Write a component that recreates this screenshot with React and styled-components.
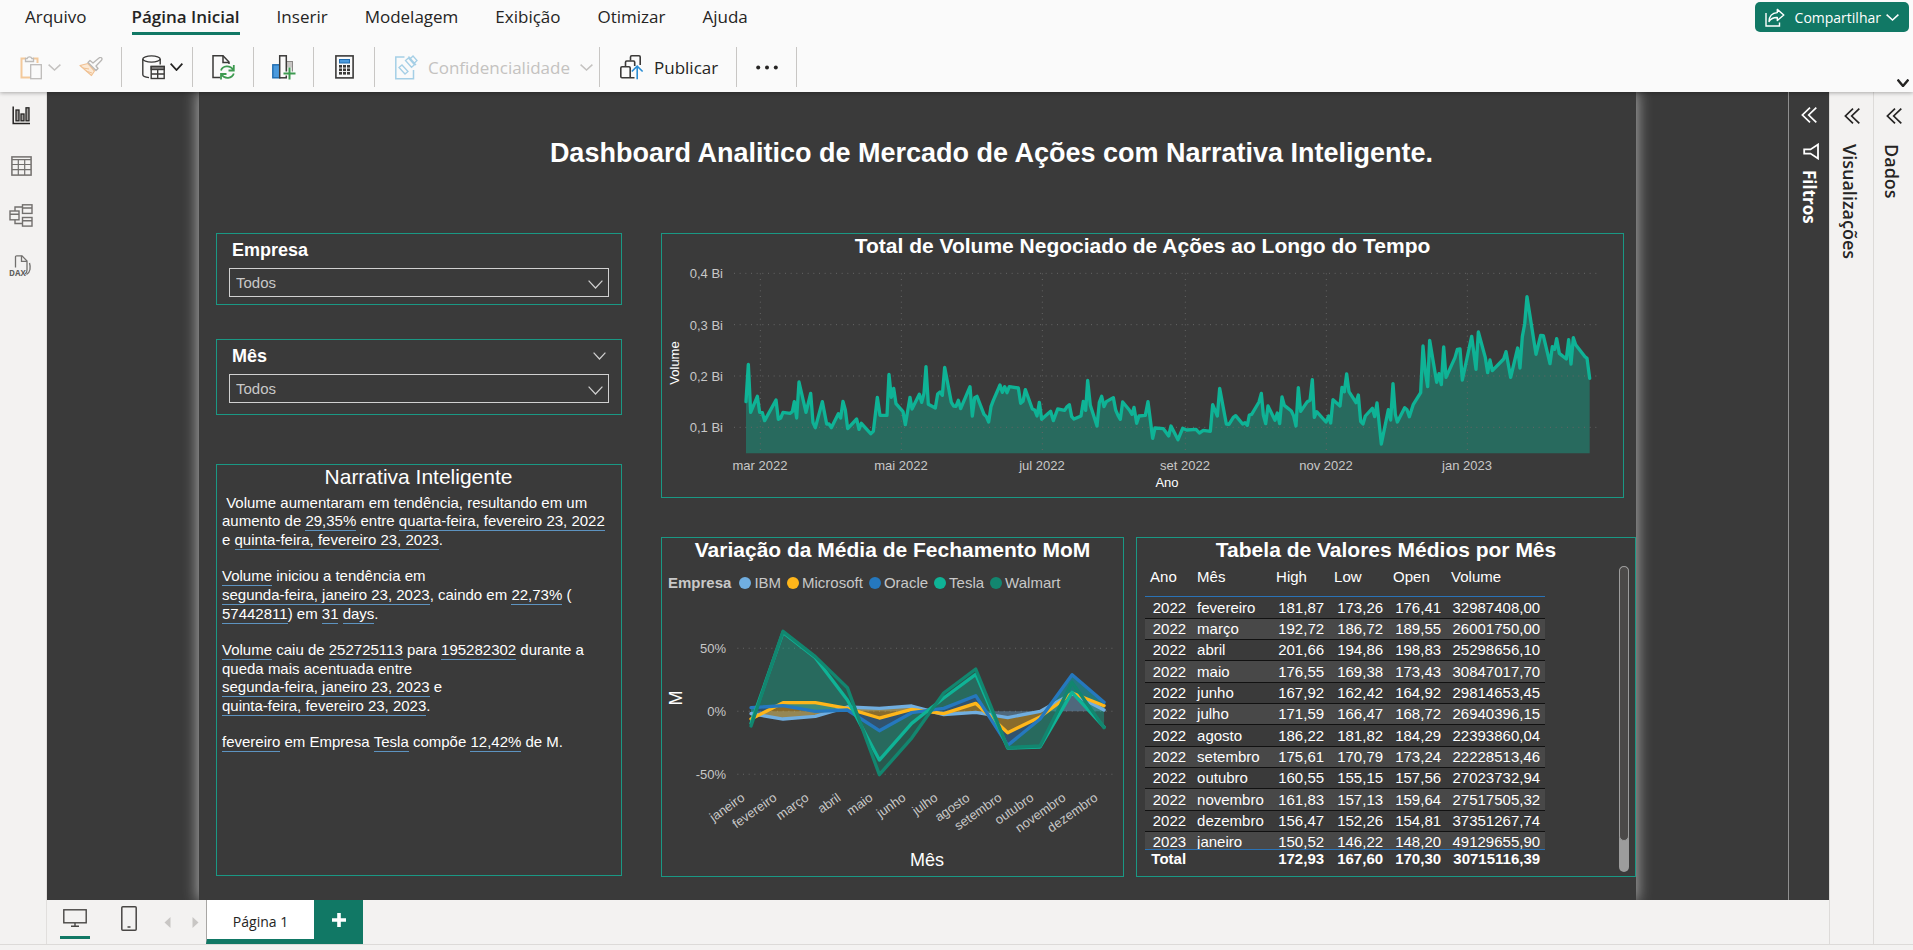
import React from "react";
import styled, { createGlobalStyle } from "styled-components";

const C = {
  chrome: "#fafafa",
  pane: "#f3f2f1",
  line: "#e1dfdd",
  canvas: "#3a3a3a",
  accent: "#117865",
  frame: "#1a9884",
  ink: "#252423",
  ibm: "#70aee0",
  microsoft: "#ffb61a",
  oracle: "#2578be",
  tesla: "#0fb396",
  walmart: "#12866f",
};

const GlobalStyle = createGlobalStyle`
  *, *::before, *::after { box-sizing: border-box; }
  body { margin: 0; background: ${C.pane}; font-family: "Open Sans", "Noto Sans", sans-serif; }
  button, select { font: inherit; color: inherit; }
  button { border: 0; padding: 0; background: none; cursor: pointer; }
  h1, h2, p { margin: 0; }
  svg { display: block; flex: none; }
`;

const Shell = styled.div`
  min-height: 100vh;
  display: flex;
  flex-direction: column;
`;

const Header = styled.header`
  position: relative;
  z-index: 2;
  height: 92px;
  background: ${C.chrome};
  box-shadow: 0 1px 4px rgba(0, 0, 0, 0.3);
`;

const MenuBar = styled.div`
  display: flex;
  justify-content: space-between;
  height: 40px;
  padding: 2px 4px 0 25px;
`;

const Menu = styled.nav`
  display: flex;
  gap: 37px;
  align-items: flex-start;
`;

const MenuLink = styled.a`
  height: 33px;
  padding-top: 3px;
  margin-left: ${(p) => (p.$active ? "8px" : "0")};
  border-bottom: 3px solid ${(p) => (p.$active ? C.accent : "transparent")};
  color: ${C.ink};
  font-size: 17px;
  line-height: 24px;
  font-weight: ${(p) => (p.$active ? 600 : 400)};
  text-decoration: none;
  white-space: nowrap;
`;

const ShareButton = styled.button`
  display: flex;
  align-items: center;
  height: 30px;
  padding: 0 10px;
  border-radius: 5px;
  background: ${C.accent};
  color: #fff;
  font-size: 14px;

  span { margin: 0 5px 0 10px; }
`;

const ToolBar = styled.div`
  display: flex;
  height: 52px;
  padding: 7px 4px 5px 0;
`;

const ToolGroup = styled.div`
  display: flex;
  align-items: center;
  justify-content: ${(p) => (p.$start ? "flex-start" : "center")};
  gap: ${(p) => p.$gap || 4}px;
  width: ${(p) => p.$w}px;
  padding-left: ${(p) => (p.$start ? "20px" : "0")};
  border-right: 1px solid #c8c6c4;
`;

const ToolButton = styled.button`
  display: flex;
  align-items: center;
  gap: ${(p) => p.$gap || 5}px;
  color: ${C.ink};
  font-size: 17px;
  white-space: nowrap;

  &:disabled { color: #c4c2c0; cursor: default; }
`;

const CollapseButton = styled.button`
  align-self: flex-end;
  margin-left: auto;
  height: 8px;
`;

const Body = styled.div`
  flex: 1;
  display: flex;
  border-bottom: 1px solid #dcdad8;
  margin-bottom: 5px;
`;

const Rail = styled.nav`
  width: 47px;
  flex: none;
  display: flex;
  flex-direction: column;
  align-items: center;
  gap: 25px;
  padding: 11px 4px 0 0;
  background: ${C.pane};
  border-right: 1px solid ${C.line};
`;

const RailButton = styled.button`
  width: 26px;
  height: 25px;
  display: flex;
  align-items: center;
  justify-content: center;
`;

const Center = styled.div`
  flex: 1;
  min-width: 0;
  display: flex;
  flex-direction: column;
`;

const Stage = styled.div`
  flex: 1;
  display: flex;
  background: ${C.canvas};
`;

const Desk = styled.main`
  flex: 1;
  min-width: 0;
  padding: 0 152px;
  overflow: hidden;
`;

const Page = styled.div`
  height: 100%;
  padding: 0 0 23px 17px;
  background: ${C.canvas};
  box-shadow: 0 0 14px 1px rgba(255, 255, 255, 0.6);
`;

const PageTitle = styled.h1`
  padding: 45px 0 64px 131px;
  text-align: center;
  color: #fff;
  font: 700 27px/32px "Liberation Sans", Arial, sans-serif;
`;

const Columns = styled.div`
  display: flex;
  gap: 39px;
  font-family: "Liberation Sans", Arial, sans-serif;
`;

const LeftColumn = styled.div`
  width: 406px;
  flex: none;
  display: flex;
  flex-direction: column;
`;

const RightColumn = styled.div`
  flex: 1;
  min-width: 0;
  display: flex;
  flex-direction: column;
  gap: 39px;
`;

const Card = styled.section`
  border: 1px solid ${C.frame};
  color: #fff;
`;

const VolumeCard = styled(Card)`
  margin-right: 12px;
  min-height: 265px;
`;

const CardRow = styled.div`
  display: flex;
  gap: 12px;
`;

const RowCard = styled(Card)`
  flex: ${(p) => p.$share} 1 0;
  min-width: 0;
  height: 340px;
`;

const CardTitle = styled.h2`
  height: 28px;
  text-align: center;
  white-space: nowrap;
  font-size: 21px;
  line-height: 24px;
`;

const SlicerCard = styled(Card)`
  height: ${(p) => p.$h}px;
  margin-bottom: ${(p) => p.$gap}px;
  padding: 4px 12px 0;
`;

const SlicerHead = styled.div`
  display: flex;
  align-items: center;
  justify-content: space-between;
  height: 24px;
  padding: 0 3px;
  margin-bottom: 6px;

  label { font-size: 18px; font-weight: 700; }
`;

const SelectBox = styled.div`
  display: grid;
  align-items: center;

  select, svg { grid-area: 1 / 1; }
  svg { justify-self: end; margin: 4px 6px 0 0; pointer-events: none; }
`;

const Select = styled.select`
  appearance: none;
  width: 100%;
  height: 29px;
  padding: 0 24px 0 6px;
  border: 1px solid #d0d0d0;
  border-radius: 0;
  background: transparent;
  color: #c8c8c8;
  font-size: 15px;
`;

const NarrativeCard = styled(Card)`
  height: 412px;
  padding: 0 6px 0 5px;

  h2 {
    height: 29px;
    text-align: center;
    font-size: 21px;
    line-height: 24px;
    font-weight: 400;
  }

  p {
    margin-bottom: 17px;
    font-size: 15px;
    line-height: 18px;
    white-space: pre-wrap;
  }
`;

const Value = styled.span`
  display: inline-block;
  white-space: nowrap;
  border-bottom: 1px solid #5d93c0;
`;

const Legend = styled.div`
  display: flex;
  align-items: center;
  gap: 6px;
  height: 32px;
  padding: 1px 0 0 6px;
  color: #c8c8c8;
  font-size: 15px;

  b { margin-right: 2px; }
`;

const LegendItem = styled.span`
  display: flex;
  align-items: center;
  gap: 3px;

  &::before {
    content: "";
    width: 12px;
    height: 12px;
    border-radius: 50%;
    background: ${(p) => p.$color};
  }
`;

const Chart = styled.svg`
  width: 100%;
  height: auto;
  font-family: "Liberation Sans", Arial, sans-serif;

  text { dominant-baseline: central; }
`;

const AxisLabel = styled.text`
  fill: #c8c8c8;
  font-size: 13px;
`;

const AxisName = styled.text`
  fill: #fff;
  font-size: ${(p) => p.$size}px;
  text-anchor: middle;
`;

const TableArea = styled.div`
  display: flex;
  justify-content: space-between;
  padding: 0 6px 0 8px;
`;

const TableScroll = styled.div`
  height: 305px;
  overflow: hidden;
`;

const DataTable = styled.table`
  width: 400px;
  table-layout: fixed;
  border-collapse: separate;
  border-spacing: 0;
  font-size: 15px;
  line-height: 18px;

  th, td { padding: 0 5px; text-align: right; white-space: nowrap; }
  td:nth-child(2) { text-align: left; }
  thead th {
    height: 31px;
    padding-bottom: 9px;
    border-bottom: 1px solid #2a72b5;
    text-align: left;
    font-weight: 400;
    vertical-align: middle;
  }
  tbody td { height: 21px; border-bottom: 1px solid #111; }
  tbody tr:nth-child(3n + 1) td { height: 22px; }
  tbody td:first-child, tfoot th { padding-right: 6px; }
  tbody tr:nth-child(even) td { background: #484848; }
  tfoot th, tfoot td {
    position: sticky;
    bottom: 0;
    height: 22px;
    border-top: 1px solid #2a72b5;
    background: ${C.canvas};
    font-weight: 700;
    vertical-align: top;
  }
`;

const ScrollTrack = styled.div`
  width: 10px;
  height: 306px;
  border-radius: 5px;
  background: #9c9c9c;
`;

const ScrollThumb = styled.div`
  height: 275px;
  border: 1px solid #9c9c9c;
  border-radius: 5px;
  background: #4b4948;
`;

const SidePane = styled.aside`
  width: ${(p) => p.$w}px;
  flex: none;
  display: flex;
  flex-direction: column;
  align-items: center;
  gap: 20px;
  padding-top: ${(p) => (p.$dark ? 15 : 16)}px;
  border-left: 1px solid ${(p) => (p.$dark ? "#8f8f8f" : "#dddbd9")};
  background: ${(p) => (p.$dark ? C.canvas : C.pane)};
  color: ${(p) => (p.$dark ? "#fff" : C.ink)};
`;

const FilterHead = styled.div`
  display: flex;
  flex-direction: column;
  align-items: center;
  gap: 10px;
  padding-left: 4px;
`;

const PaneLabel = styled.span`
  writing-mode: vertical-rl;
  padding-right: 4px;
  font-size: ${(p) => (p.$bold ? 17 : 18)}px;
  line-height: 20px;
  font-weight: ${(p) => (p.$bold ? 700 : 600)};
`;

const FooterBar = styled.footer`
  display: flex;
  align-items: stretch;
  height: 44px;
  background: ${C.pane};
`;

const ViewButton = styled.button`
  display: flex;
  justify-content: center;
  width: 30px;
  margin: 0 ${(p) => p.$right}px 5px 0;
  padding-top: ${(p) => p.$top}px;
  border-bottom: 3px solid ${(p) => (p.$active ? C.accent : "transparent")};
`;

const ViewGroup = styled.div`
  display: flex;
  width: 159px;
  padding-left: 13px;
`;

const PageArrow = styled.button`
  width: 22px;
  margin-left: 6px;
  display: flex;
  align-items: center;
  justify-content: center;
`;

const PageTab = styled.button`
  width: 108px;
  border-left: 1px solid #a8a6a4;
  border-bottom: 5px solid ${C.accent};
  background: #fff;
  padding-top: 4px;
  font-size: 14px;
  color: ${C.ink};
`;

const AddPage = styled.button`
  display: flex;
  align-items: center;
  justify-content: center;
  width: 49px;
  padding-bottom: 4px;
  background: ${C.accent};
`;

/* ---------- icons ---------- */

const Chevron = ({ w = 13, h = 7, color = C.ink, sw = 1.5 }) => (
  <svg width={w} height={h} viewBox={`0 0 ${w} ${h}`} fill="none" stroke={color} strokeWidth={sw}>
    <path d={`M0.6 0.6 L${w / 2} ${h - 1} L${w - 0.6} 0.6`} />
  </svg>
);

const DoubleChevron = () => (
  <svg width="16" height="16" viewBox="0 0 16 16" fill="none" stroke="currentColor" strokeWidth="1.7">
    <path d="M9 0.7 L1.4 8 L9 15.3 M15.3 0.7 L7.7 8 L15.3 15.3" />
  </svg>
);

const PasteIcon = () => (
  <svg width="23" height="25" viewBox="0 0 23 25" fill="none">
    <path d="M6 3.5 H1.5 V22.5 H10" stroke="#f3c99b" strokeWidth="2" />
    <path d="M13 3.5 H17.5 V8" stroke="#f3c99b" strokeWidth="2" />
    <path d="M5.5 6.5 V3.5 H7.2 A2.4 2.4 0 0 1 11.8 3.5 H13.5 V6.5 Z" stroke="#bdbbb9" strokeWidth="1.3" fill="#fafafa" />
    <rect x="10.7" y="9.7" width="10.6" height="14" stroke="#bdbbb9" strokeWidth="1.3" fill="#fafafa" />
  </svg>
);

const BrushIcon = () => (
  <svg width="24" height="20" viewBox="0 0 24 20" fill="none">
    <path d="M1 8.5 L9 6.5 L15.5 14 L12.5 18.5 Z" fill="#fbe9d5" stroke="#f0c193" strokeWidth="1.2" strokeLinejoin="round" />
    <path d="M4 11 L10 12 M7 14 L13 16" stroke="#f0c193" />
    <path d="M9 5.5 L11 3.5 L14 6 L20 1 A1.6 1.6 0 0 1 22.5 3.2 L17 9 L19 11.5 L17 13.5 Z" fill="#fafafa" stroke="#b8b6b4" strokeWidth="1.3" strokeLinejoin="round" />
  </svg>
);

const DataIcon = () => (
  <svg width="23" height="25" viewBox="0 0 23 25" fill="none" stroke="#3b3a39" strokeWidth="1.4">
    <ellipse cx="9.5" cy="4" rx="8.7" ry="3.1" />
    <path d="M0.8 4 V19.5 C0.8 21.2 3 22.3 7 22.6 M18.2 4 V9.5" />
    <rect x="9.2" y="11.5" width="13" height="12" fill="#fafafa" />
    <rect x="9.2" y="11.5" width="13" height="3" fill="#8a8886" />
    <path d="M9.2 19 H22.2 M15.7 14.5 V23.5" />
  </svg>
);

const RefreshIcon = () => (
  <svg width="23" height="25" viewBox="0 0 23 25" fill="none" strokeWidth="1.5">
    <path d="M8 22.5 H1 V0.8 H11 L17 7 V9" stroke="#3b3a39" />
    <path d="M11 0.8 V7.5 H17" stroke="#3b3a39" />
    <path d="M9 15.5 C10.5 10.5 18 9.5 21.3 15 M21.8 10 V15.5 H16.5" stroke="#3d9a50" strokeWidth="1.8" />
    <path d="M21.8 18.5 C20 23.5 13 24.6 9.3 19.5 M9 24.5 V19 H14.5" stroke="#3d9a50" strokeWidth="1.8" />
  </svg>
);

const NewVisualIcon = () => (
  <svg width="24" height="25" viewBox="0 0 24 25" fill="none">
    <rect x="14.5" y="6.5" width="6" height="12" fill="#c8c6c4" stroke="#8a8886" />
    <rect x="0.8" y="9.8" width="7" height="13" fill="#4a9ade" stroke="#1f6cb0" strokeWidth="1.4" />
    <rect x="7.7" y="0.8" width="6.6" height="22" fill="#fafafa" stroke="#3b3a39" strokeWidth="1.5" />
    <path d="M17.5 12.5 V24.5 M11.5 18.5 H23.5" stroke="#fafafa" strokeWidth="4" />
    <path d="M17.5 12.5 V24.5 M11.5 18.5 H23.5" stroke="#3d9a50" strokeWidth="2" />
  </svg>
);

const CalculatorIcon = () => (
  <svg width="19" height="24" viewBox="0 0 19 24" fill="none">
    <rect x="0.9" y="0.9" width="17.2" height="22" stroke="#3b3a39" strokeWidth="1.6" />
    <rect x="4.5" y="4.5" width="10" height="3.5" fill="#4a9ade" stroke="#1f6cb0" />
    {[10, 13.5, 17].map((y) =>
      [4, 8, 12].map((x) => <rect key={`${x}-${y}`} x={x} y={y} width="3" height="2.6" fill="#3b3a39" />)
    )}
  </svg>
);

const SensitivityIcon = () => (
  <svg width="23" height="25" viewBox="0 0 23 25" fill="none" stroke="#a5cfe6" strokeWidth="1.5">
    <path d="M9.5 2 H0.8 V23.8 H18.5 V15" />
    <path d="M4 12.5 L7 10 L13 16.5 L10 19 Z" strokeWidth="1.3" />
    <path d="M10.5 5.5 L13.5 3 L19.5 9.8 L16.5 12.3 Z M13.5 1.5 L21 10 M15.5 3.5 L18 1 L22 5.5 L19.5 8" strokeWidth="1.3" />
  </svg>
);

const PublishIcon = () => (
  <svg width="24" height="25" viewBox="0 0 24 25" fill="none" stroke="#3b3a39" strokeWidth="1.6">
    <path d="M10.5 5.5 V2 Q10.5 0.8 11.7 0.8 H19 Q20.2 0.8 20.2 2 V10" />
    <path d="M5.5 11.5 V7.2 Q5.5 6 6.7 6 H13.5 Q14.7 6 14.7 7.2 V11" />
    <path d="M10.2 22.8 H2 Q0.8 22.8 0.8 21.6 V13 Q0.8 11.8 2 11.8 H9 Q10.2 11.8 10.2 13 Z M10.2 22.8 H14.5" />
    <path d="M17.2 24.3 V11.5 M11.8 16.5 L17.2 11.2 L22.6 16.5" stroke="#2a8dd4" />
  </svg>
);

const DotsIcon = () => (
  <svg width="22" height="5" viewBox="0 0 22 5" fill={C.ink}>
    <circle cx="2.2" cy="2.5" r="2" />
    <circle cx="11" cy="2.5" r="2" />
    <circle cx="19.8" cy="2.5" r="2" />
  </svg>
);

const ShareIcon = () => (
  <svg width="20" height="19" viewBox="0 0 20 19" fill="none" stroke="#fff" strokeWidth="1.4">
    <path d="M1 5 V18 H14.5 V14.5" />
    <path d="M12.3 1.4 L18.8 7 L12.3 12.5 V9.5 C8.5 9.3 6 10.5 4 13.5 C4.2 8.5 7 5 12.3 4.6 Z" strokeLinejoin="round" />
  </svg>
);

const ReportIcon = () => (
  <svg width="19" height="19" viewBox="0 0 19 19" fill="#a19f9d" stroke="#252423" strokeWidth="1.3">
    <path d="M1.2 0.5 V17.4 H18" fill="none" strokeWidth="1.5" />
    <rect x="4" y="4" width="3" height="10.8" />
    <rect x="9" y="8" width="3" height="6.8" />
    <rect x="14" y="1.8" width="3" height="13" />
  </svg>
);

const TableIcon = () => (
  <svg width="21" height="20" viewBox="0 0 21 20" fill="none" stroke="#72706e" strokeWidth="1.2">
    <rect x="0.9" y="0.9" width="19.2" height="18.2" strokeWidth="1.5" />
    <path d="M1 3.6 H20 M1 8.5 H20 M1 13.7 H20 M7.3 3.6 V19 M13.7 3.6 V19" />
  </svg>
);

const ModelIcon = () => (
  <svg width="24" height="23" viewBox="0 0 24 23" fill="none" stroke="#72706e" strokeWidth="1.4">
    <rect x="13.5" y="0.8" width="9.5" height="8.6" />
    <rect x="13.5" y="13.5" width="9.5" height="8.6" />
    <rect x="1" y="7" width="9" height="8.8" />
    <path d="M13.5 4 H23 M13.5 16.8 H23 M1 10.2 H10 M6 7 V3 H13.5 M6 15.8 V19.5 H13.5" />
  </svg>
);

const DaxIcon = () => (
  <svg width="24" height="22" viewBox="0 0 24 22" fill="none" stroke="#72706e" strokeWidth="1.3">
    <path d="M6.5 12.5 V2 Q6.5 0.8 7.7 0.8 H13 L18 6 V15 Q18 18 16 19" />
    <path d="M12.5 0.8 V6.3 H18 M20.5 8 C21.8 12 21.5 17.5 17.5 19.5" />
    <text x="0" y="20.5" fontSize="8" fontWeight="700" fill="#605e5c" stroke="none" fontFamily="Open Sans, sans-serif">DAX</text>
  </svg>
);

const FilterIcon = () => (
  <svg width="16" height="17" viewBox="0 0 16 17" fill="none" stroke="#fff" strokeWidth="1.8">
    <path d="M15 1.5 V15.5 L7.5 10.6 H1.2 V6.4 H7.5 Z" />
  </svg>
);

const DesktopIcon = () => (
  <svg width="24" height="18" viewBox="0 0 24 18" fill="none" stroke="#484644" strokeWidth="1.4">
    <rect x="0.8" y="0.8" width="22.4" height="13" />
    <path d="M12 14 V17 M8 17.2 H16" />
  </svg>
);

const PhoneIcon = () => (
  <svg width="16" height="25" viewBox="0 0 16 25" fill="none" stroke="#484644" strokeWidth="1.5">
    <rect x="0.8" y="0.8" width="14.4" height="23.4" rx="1" />
    <path d="M6.5 21 H9.5" />
  </svg>
);

const ArrowIcon = ({ left }) => (
  <svg width="7" height="11" viewBox="0 0 7 11" fill="#c8c6c4">
    <path d={left ? "M6.5 0 V11 L0.5 5.5 Z" : "M0.5 0 V11 L6.5 5.5 Z"} />
  </svg>
);

const PlusIcon = () => (
  <svg width="14" height="14" viewBox="0 0 14 14" stroke="#fff" strokeWidth="3.6">
    <path d="M7 0 V14 M0 7 H14" />
  </svg>
);

/* ---------- volume chart ---------- */

const VOLUME_LINE =
  "288,545 295,433 302,577 322,529 329,577 337,578 344,602 378,540 385,598 392,594 399,577 420,580 427,575 433,545 440,594 447,486 468,577 482,520 489,608 496,623 517,545 530,612 537,612 544,623 565,581 572,594 579,544 586,570 593,626 620,597 627,628 634,610 662,641 670,634 682,532 690,586 711,586 717,463 724,532 731,505 738,551 759,575 766,614 780,532 786,567 808,523 815,547 822,520 828,440 835,553 856,564 863,522 870,516 877,526 884,442 904,547 911,558 918,559 925,541 932,566 960,500 967,588 974,533 981,529 1002,583 1009,590 1016,606 1023,560 1030,541 1050,495 1057,517 1064,500 1071,518 1078,500 1105,504 1112,550 1119,544 1126,509 1147,567 1154,570 1161,588 1168,547 1175,598 1202,574 1210,602 1223,567 1244,571 1251,560 1258,554 1265,590 1272,597 1293,588 1300,544 1307,571 1313,481 1321,556 1341,618 1348,547 1355,529 1362,560 1369,545 1390,533 1397,570 1404,586 1411,598 1418,546 1438,570 1446,583 1452,562 1460,610 1467,588 1486,586 1494,545 1508,655 1515,624 1540,626 1556,648 1563,618 1584,659 1598,625 1610,630 1638,628 1648,639 1660,631 1681,634 1688,554 1702,588 1709,505 1729,612 1737,613 1750,592 1757,587 1778,612 1785,608 1792,616 1798,585 1805,583 1827,546 1834,520 1840,585 1847,611 1854,558 1875,601 1882,579 1889,611 1896,531 1903,556 1924,573 1931,588 1938,618 1945,503 1952,574 1972,545 1980,541 1987,479 1993,592 2000,575 2028,606 2036,588 2042,609 2049,539 2070,558 2076,502 2083,515 2090,462 2097,515 2118,548 2125,525 2132,604 2139,612 2146,588 2167,565 2174,590 2181,549 2194,672 2215,569 2222,600 2229,491 2236,583 2242,606 2264,563 2271,569 2278,590 2290,553 2312,518 2319,378 2326,455 2333,500 2339,361 2360,487 2367,461 2374,494 2381,381 2388,472 2415,413 2422,388 2430,387 2437,480 2465,349 2478,448 2485,336 2506,413 2513,458 2520,420 2527,452 2561,417 2568,395 2582,472 2603,384 2610,444 2617,350 2624,312 2631,230 2658,403 2672,346 2680,347 2700,431 2707,380 2714,388 2720,356 2728,400 2749,417 2756,359 2763,432 2770,353 2777,374 2805,410 2811,415 2819,475";

const VOLUME_ROWS = [
  ["0,4 Bi", 160],
  ["0,3 Bi", 314],
  ["0,2 Bi", 468],
  ["0,1 Bi", 622],
];
const VOLUME_COLS = [
  ["mar 2022", 331],
  ["mai 2022", 754],
  ["jul 2022", 1177],
  ["set 2022", 1606],
  ["nov 2022", 2029],
  ["jan 2023", 2452],
];

const GridLine = styled.path`
  fill: none;
  stroke: #666;
  stroke-width: 3;
  stroke-dasharray: 3 14;
`;

const VolumeChart = () => (
  <Chart viewBox="0 0 961 235" role="img" aria-label="Total de Volume Negociado">
    <svg width="961" height="235" viewBox="36 126 2883 705">
      <polygon points={`288,700 ${VOLUME_LINE} 2819,700`} fill={C.tesla} fillOpacity="0.4" />
      {VOLUME_ROWS.map(([t, y]) => <GridLine key={t} d={`M252 ${y} H2850`} />)}
      {VOLUME_COLS.map(([t, x]) => <GridLine key={t} d={`M${x} 160 V700`} />)}
      <polyline points={VOLUME_LINE} fill="none" stroke={C.tesla} strokeWidth="10" strokeLinejoin="round" strokeLinecap="round" />
    </svg>
    {VOLUME_ROWS.map(([t, y]) => (
      <AxisLabel key={t} x="61" y={Math.round((y - 126) / 3)} textAnchor="end">{t}</AxisLabel>
    ))}
    {VOLUME_COLS.map(([t, x]) => (
      <AxisLabel key={t} x={Math.round((x - 36) / 3)} y="203" textAnchor="middle">{t}</AxisLabel>
    ))}
    <AxisName $size={13} x="505" y="220">Ano</AxisName>
    <AxisName $size={13} transform="translate(12 101) rotate(-90)">Volume</AxisName>
  </Chart>
);

/* ---------- month over month chart ---------- */

const MONTHS = ["janeiro", "fevereiro", "março", "abril", "maio", "junho", "julho", "agosto", "setembro", "outubro", "novembro", "dezembro"];
const SERIES = [
  { name: "IBM", color: C.ibm, y: [581, 597, 589, 561, 565, 558, 584, 577, 593, 574, 520, 570] },
  { name: "Microsoft", color: C.microsoft, y: [597, 548, 548, 565, 594, 568, 581, 550, 638, 591, 519, 557] },
  { name: "Oracle", color: C.oracle, y: [563, 557, 574, 570, 632, 578, 565, 527, 676, 597, 464, 547] },
  { name: "Tesla", color: C.tesla, y: [610, 337, 413, 540, 720, 610, 534, 463, 684, 681, 517, 621] },
  { name: "Walmart", color: C.walmart, y: [618, 334, 410, 503, 764, 654, 519, 447, 683, 678, 487, 623] },
];
const ZERO = MONTHS.map(() => 574);
const monthX = (i) => 303 + Math.round(i * 96.3);
const toPoints = (ys) => ys.map((y, i) => `${monthX(i)},${y}`);

const MomChart = () => (
  <Chart viewBox="0 0 461 278" role="img" aria-label="Variação da Média de Fechamento">
    <svg width="461" height="278" viewBox="36 234 1383 834">
      {[385, 574, 763].map((y) => <GridLine key={y} d={`M262 ${y} H1396`} />)}
      {SERIES.map((s, i) => (
        <polygon
          key={s.name}
          points={[...toPoints(s.y), ...toPoints(i ? SERIES[i - 1].y : ZERO).reverse()].join(" ")}
          fill={s.color}
          fillOpacity="0.4"
        />
      ))}
      {SERIES.map((s) => (
        <polyline key={s.name} points={toPoints(s.y).join(" ")} fill="none" stroke={s.color} strokeWidth="10" strokeLinejoin="round" strokeLinecap="round" />
      ))}
    </svg>
    <AxisLabel x="64" y="50" textAnchor="end">50%</AxisLabel>
    <AxisLabel x="64" y="113" textAnchor="end">0%</AxisLabel>
    <AxisLabel x="64" y="176" textAnchor="end">-50%</AxisLabel>
    {MONTHS.map((m, i) => (
      <AxisLabel key={m} textAnchor="end" transform={`translate(${Math.round((monthX(i) - 60) / 3)} 198) rotate(-35)`}>{m}</AxisLabel>
    ))}
    <AxisName $size={18} x="265" y="262">Mês</AxisName>
    <AxisName $size={18} transform="translate(14 100) rotate(-90)">M</AxisName>
  </Chart>
);

/* ---------- table ---------- */

const COLUMNS = [["Ano", 47], ["Mês", 79], ["High", 58], ["Low", 59], ["Open", 58], ["Volume", 99]];
const ROWS = [
  ["2022", "fevereiro", "181,87", "173,26", "176,41", "32987408,00"],
  ["2022", "março", "192,72", "186,72", "189,55", "26001750,00"],
  ["2022", "abril", "201,66", "194,86", "198,83", "25298656,10"],
  ["2022", "maio", "176,55", "169,38", "173,43", "30847017,70"],
  ["2022", "junho", "167,92", "162,42", "164,92", "29814653,45"],
  ["2022", "julho", "171,59", "166,47", "168,72", "26940396,15"],
  ["2022", "agosto", "186,22", "181,82", "184,29", "22393860,04"],
  ["2022", "setembro", "175,61", "170,79", "173,24", "22228513,46"],
  ["2022", "outubro", "160,55", "155,15", "157,56", "27023732,94"],
  ["2022", "novembro", "161,83", "157,13", "159,64", "27517505,32"],
  ["2022", "dezembro", "156,47", "152,26", "154,81", "37351267,74"],
  ["2023", "janeiro", "150,52", "146,22", "148,20", "49129655,90"],
];

const ValuesTable = () => (
  <DataTable>
    <colgroup>
      {COLUMNS.map(([name, w]) => <col key={name} width={w} />)}
    </colgroup>
    <thead>
      <tr>{COLUMNS.map(([name]) => <th key={name} scope="col">{name}</th>)}</tr>
    </thead>
    <tbody>
      {ROWS.map((row) => (
        <tr key={row[0] + row[1]}>{row.map((cell, i) => <td key={i}>{cell}</td>)}</tr>
      ))}
    </tbody>
    <tfoot>
      <tr>
        <th scope="row">Total</th>
        <td />
        <td>172,93</td>
        <td>167,60</td>
        <td>170,30</td>
        <td>30715116,39</td>
      </tr>
    </tfoot>
  </DataTable>
);

const Slicer = ({ id, label, height, gap, expandable }) => (
  <SlicerCard $h={height} $gap={gap}>
    <SlicerHead>
      <label htmlFor={id}>{label}</label>
      {expandable && <Chevron w={13} h={8} color="#d0d0d0" sw={1.2} />}
    </SlicerHead>
    <SelectBox>
      <Select id={id} defaultValue="Todos">
        <option>Todos</option>
      </Select>
      <Chevron w={15} h={9} color="#d0d0d0" sw={1.2} />
    </SelectBox>
  </SlicerCard>
);

const MENU = ["Arquivo", "Página Inicial", "Inserir", "Modelagem", "Exibição", "Otimizar", "Ajuda"];

export default function App() {
  return (
    <Shell>
      <GlobalStyle />
      <Header>
        <MenuBar>
          <Menu>
            {MENU.map((m) => (
              <MenuLink key={m} href="#" $active={m === "Página Inicial"}>{m}</MenuLink>
            ))}
          </Menu>
          <ShareButton>
            <ShareIcon />
            <span>Compartilhar</span>
            <Chevron color="#fff" />
          </ShareButton>
        </MenuBar>
        <ToolBar>
          <ToolGroup $w={122} $start $gap={18}>
            <ToolButton disabled aria-label="Colar"><PasteIcon /><Chevron color="#c4c2c0" /></ToolButton>
            <ToolButton disabled aria-label="Pincel de formatação"><BrushIcon /></ToolButton>
          </ToolGroup>
          <ToolGroup $w={71} $start>
            <ToolButton aria-label="Obter dados"><DataIcon /><Chevron w={13} h={8} sw={1.8} /></ToolButton>
          </ToolGroup>
          <ToolGroup $w={61}><ToolButton aria-label="Atualizar"><RefreshIcon /></ToolButton></ToolGroup>
          <ToolGroup $w={60}><ToolButton aria-label="Novo visual"><NewVisualIcon /></ToolButton></ToolGroup>
          <ToolGroup $w={61}><ToolButton aria-label="Nova medida"><CalculatorIcon /></ToolButton></ToolGroup>
          <ToolGroup $w={225} $start>
            <ToolButton disabled $gap={10}><SensitivityIcon />Confidencialidade<Chevron color="#c4c2c0" /></ToolButton>
          </ToolGroup>
          <ToolGroup $w={137} $start>
            <ToolButton $gap={10}><PublishIcon />Publicar</ToolButton>
          </ToolGroup>
          <ToolGroup $w={60}><ToolButton aria-label="Mais opções"><DotsIcon /></ToolButton></ToolGroup>
          <CollapseButton aria-label="Recolher faixa de opções"><Chevron w={12} h={8} sw={2.4} /></CollapseButton>
        </ToolBar>
      </Header>

      <Body>
        <Rail>
          <RailButton aria-label="Relatório"><ReportIcon /></RailButton>
          <RailButton aria-label="Tabela"><TableIcon /></RailButton>
          <RailButton aria-label="Modelo"><ModelIcon /></RailButton>
          <RailButton aria-label="Consulta DAX"><DaxIcon /></RailButton>
        </Rail>

        <Center>
          <Stage>
            <Desk>
              <Page>
                <PageTitle>Dashboard Analitico de Mercado de Ações com Narrativa Inteligente.</PageTitle>
                <Columns>
                  <LeftColumn>
                    <Slicer id="empresa" label="Empresa" height={72} gap={34} />
                    <Slicer id="mes" label="Mês" height={76} gap={49} expandable />
                    <NarrativeCard>
                      <h2>Narrativa Inteligente</h2>
                      <p>
                        {" "}Volume aumentaram em tendência, resultando em um aumento de <Value>29,35%</Value> entre{" "}
                        <Value>quarta-feira, fevereiro 23, 2022</Value> e <Value>quinta-feira, fevereiro 23, 2023</Value>.
                      </p>
                      <p>
                        <Value>Volume</Value> iniciou a tendência em <Value>segunda-feira, janeiro 23, 2023</Value>, caindo em{" "}
                        <Value>22,73%</Value> (<Value>57442811</Value>) em <Value>31</Value> <Value>days</Value>.
                      </p>
                      <p>
                        <Value>Volume</Value> caiu de <Value>252725113</Value> para <Value>195282302</Value> durante a queda
                        mais acentuada entre <Value>segunda-feira, janeiro 23, 2023</Value> e{" "}
                        <Value>quinta-feira, fevereiro 23, 2023</Value>.
                      </p>
                      <p>
                        <Value>fevereiro</Value> em Empresa <Value>Tesla</Value> compõe <Value>12,42%</Value> de M.
                      </p>
                    </NarrativeCard>
                  </LeftColumn>

                  <RightColumn>
                    <VolumeCard>
                      <CardTitle>Total de Volume Negociado de Ações ao Longo do Tempo</CardTitle>
                      <VolumeChart />
                    </VolumeCard>
                    <CardRow>
                      <RowCard $share={463}>
                        <CardTitle>Variação da Média de Fechamento MoM</CardTitle>
                        <Legend>
                          <b>Empresa</b>
                          {SERIES.map((s) => <LegendItem key={s.name} $color={s.color}>{s.name}</LegendItem>)}
                        </Legend>
                        <MomChart />
                      </RowCard>
                      <RowCard $share={500}>
                        <CardTitle>Tabela de Valores Médios por Mês</CardTitle>
                        <TableArea>
                          <TableScroll><ValuesTable /></TableScroll>
                          <ScrollTrack><ScrollThumb /></ScrollTrack>
                        </TableArea>
                      </RowCard>
                    </CardRow>
                  </RightColumn>
                </Columns>
              </Page>
            </Desk>
            <SidePane $dark $w={41}>
              <DoubleChevron />
              <FilterHead>
                <FilterIcon />
                <PaneLabel $bold>Filtros</PaneLabel>
              </FilterHead>
            </SidePane>
          </Stage>
          <FooterBar>
            <ViewGroup>
              <ViewButton $active $top={9} $right={24} aria-label="Layout da área de trabalho"><DesktopIcon /></ViewButton>
              <ViewButton $top={6} $right={6} aria-label="Layout móvel"><PhoneIcon /></ViewButton>
              <PageArrow aria-label="Página anterior"><ArrowIcon left /></PageArrow>
              <PageArrow aria-label="Próxima página"><ArrowIcon /></PageArrow>
            </ViewGroup>
            <PageTab>Página 1</PageTab>
            <AddPage aria-label="Nova página"><PlusIcon /></AddPage>
          </FooterBar>
        </Center>

        <SidePane $w={44}>
          <DoubleChevron />
          <PaneLabel>Visualizações</PaneLabel>
        </SidePane>
        <SidePane $w={40}>
          <DoubleChevron />
          <PaneLabel>Dados</PaneLabel>
        </SidePane>
      </Body>
    </Shell>
  );
}
